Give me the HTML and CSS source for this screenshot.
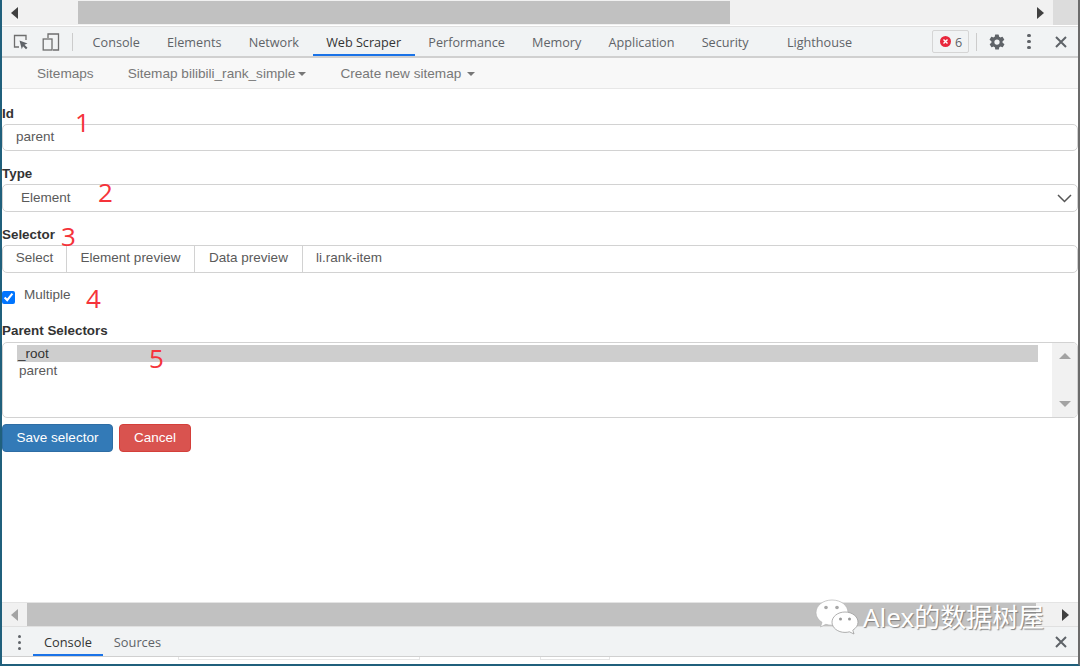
FILE: index.html
```html
<!DOCTYPE html>
<html lang="en">
<head>
<meta charset="utf-8">
<title>Web Scraper</title>
<link rel="stylesheet" href="styles.css">
</head>
<body>
<div class="window">
  <div class="hscroll top">
    <span class="arrow left dark"></span>
    <div class="track"><div class="thumb top-thumb"></div></div>
    <span class="arrow right dark"></span>
    <div class="corner"></div>
  </div>

  <div class="toolbar">
    <svg class="tool-icon first" width="18" height="18" viewBox="0 0 18 18" fill="none">
      <path d="M7 14H2.5V2.5H14V7" stroke="#6e6e6e" stroke-width="1.3"/>
      <path d="M7.5 7.5l8 3-3 1.2 3 3-1.5 1.500-3-3-1.200 3z" fill="#5f6368"/>
    </svg>
    <svg class="tool-icon second" width="18" height="20" viewBox="0 0 18 20" fill="none">
      <path d="M6 6V2h10.500v16H11" stroke="#6e6e6e" stroke-width="1.300"/>
      <rect x="1.200" y="7" width="8.800" height="11" stroke="#6e6e6e" stroke-width="1.300"/>
    </svg>
    <span class="vsep"></span>
    <div class="tabs">
      <span class="tab t-console">Console</span>
      <span class="tab t-elements">Elements</span>
      <span class="tab t-network">Network</span>
      <span class="tab active t-scraper">Web Scraper</span>
      <span class="tab t-perf">Performance</span>
      <span class="tab t-memory">Memory</span>
      <span class="tab t-app">Application</span>
      <span class="tab t-security">Security</span>
      <span class="tab t-light">Lighthouse</span>
    </div>
    <div class="tool-right">
      <span class="err-badge">
        <svg width="11" height="11" viewBox="0 0 11 11"><circle cx="5.500" cy="5.500" r="5.500" fill="#e8273c"/><path d="M3.500 3.500l4 4M7.500 3.500l-4 4" stroke="#fff" stroke-width="1.400"/></svg>
        <span>6</span>
      </span>
      <span class="vsep small"></span>
      <svg class="gear" width="18" height="18" viewBox="0 0 24 24"><path fill="#5f6368" d="M19.4 13a7.5 7.5 0 0 0 0-2l2.1-1.6a.5.5 0 0 0 .1-.6l-2-3.5a.5.5 0 0 0-.6-.2l-2.5 1a7.3 7.3 0 0 0-1.7-1l-.4-2.6a.5.5 0 0 0-.5-.5h-4a.5.5 0 0 0-.5.4l-.4 2.7a7.6 7.6 0 0 0-1.7 1l-2.5-1a.5.5 0 0 0-.6.2l-2 3.5a.5.5 0 0 0 .1.6L4.6 11a7.500 7.500 0 0 0 0 2l-2.100 1.600a.5.5 0 0 0-.1.6l2 3.500c.1.200.4.300.6.200l2.500-1c.5.400 1.100.700 1.700 1l.4 2.600c0 .3.200.5.500.5h4c.3 0 .5-.2.500-.4l.4-2.700a7.600 7.600 0 0 0 1.700-1l2.500 1c.2.100.5 0 .6-.2l2-3.500a.5.5 0 0 0-.1-.6zM12 15.500a3.500 3.500 0 1 1 0-7 3.500 3.500 0 0 1 0 7z"/></svg>
      <span class="dots"><i></i><i></i><i></i></span>
      <svg class="close" width="12" height="12" viewBox="0 0 12 12"><path d="M1 1l10 10M11 1L1 11" stroke="#5f6368" stroke-width="2"/></svg>
    </div>
  </div>

  <nav class="subnav">
    <span class="nav-item n-sitemaps">Sitemaps</span>
    <span class="nav-item n-sitemap">Sitemap bilibili_rank_simple<b class="caret"></b></span>
    <span class="nav-item n-create">Create new sitemap<b class="caret spaced"></b></span>
  </nav>

  <main class="content">
    <form class="form">
      <label class="label l-id">Id</label>
      <div class="control c-id">parent</div>
      <label class="label l-type">Type</label>
      <div class="control c-type">Element
        <svg class="chev" width="15" height="9" viewBox="0 0 15 9" fill="none"><path d="M1 1l6.500 6.500L14 1" stroke="#555" stroke-width="1.500"/></svg>
      </div>
      <label class="label l-selector">Selector</label>
      <div class="control group">
        <span class="addon a-select">Select</span>
        <span class="addon a-element">Element preview</span>
        <span class="addon a-data">Data preview</span>
        <span class="group-value">li.rank-item</span>
      </div>
      <div class="check-row">
        <input class="check" type="checkbox" checked>
        <span class="check-label">Multiple</span>
      </div>
      <label class="label l-parent">Parent Selectors</label>
      <div class="listbox">
        <div class="options">
          <div class="option selected">_root</div>
          <div class="option">parent</div>
        </div>
        <div class="list-scroll"><span class="tri up"></span><span class="tri down"></span></div>
      </div>
      <div class="buttons">
        <span class="btn save">Save selector</span>
        <span class="btn cancel">Cancel</span>
      </div>
    </form>
    <span class="mark m1">1</span>
    <span class="mark m2">2</span>
    <span class="mark m3">3</span>
    <span class="mark m4">4</span>
    <span class="mark m5">5</span>
  </main>

  <div class="hscroll bottom">
    <span class="arrow left grey"></span>
    <div class="track"><div class="thumb bottom-thumb"></div></div>
    <span class="arrow right dark"></span>
  </div>

  <div class="drawer">
    <span class="dots drawer-dots"><i></i><i></i><i></i></span>
    <span class="tab active d-console">Console</span>
    <span class="tab d-sources">Sources</span>
    <svg class="drawer-close" width="12" height="12" viewBox="0 0 12 12"><path d="M1 1l10 10M11 1L1 11" stroke="#5f6368" stroke-width="2"/></svg>
  </div>
  <div class="foot"><span class="foot-a"></span><span class="foot-b"></span></div>

  <div class="watermark">
    <svg width="44" height="36" viewBox="0 0 44 36">
      <path d="M17 1C8 1 1 6.500 1 13.500c0 4 2.300 7.500 6 9.800L5.500 28l5.300-2.700c2 .6 4 .9 6.200.9 9 0 16-5.600 16-12.700S26 1 17 1z" fill="#fff" stroke="#b5b5b5" stroke-width=".7"/>
      <path d="M30 13c-7.200 0-13 4.600-13 10.200S22.800 33.400 30 33.400c1.500 0 3-.2 4.400-.6L39 35l-1.200-3.800c3.200-2 5.200-4.800 5.200-8C43 17.600 37.200 13 30 13z" fill="#fff" stroke="#9a9a9a" stroke-width=".8"/>
      <circle cx="11" cy="8.500" r="1.800" fill="#a8a8a8"/><circle cx="22" cy="8.500" r="1.800" fill="#a8a8a8"/>
      <circle cx="25.500" cy="20" r="1.500" fill="#999"/><circle cx="34.500" cy="20" r="1.500" fill="#999"/>
    </svg>
    <span class="wm-text">Alex的数据树屋</span>
  </div>
</div>
</body>
</html>
```

FILE: styles.css
```css
* { box-sizing: border-box; }
html, body { margin: 0; padding: 0; height: 100%; background: #fff; overflow: hidden; }
.window {
  position: relative;
  width: 1080px;
  height: 666px;
  display: flex;
  flex-direction: column;
  border-left: 2px solid #20607c;
  border-right: 2px solid #6b6b6b;
  border-bottom: 2px solid #20607c;
  font-family: "Liberation Sans", Arial, sans-serif;
  font-size: 13.500px;
  color: #5a5a5a;
}

/* scrollbars */
.hscroll { display: flex; align-items: center; background: #f1f1f1; flex: none; }
.hscroll.top { height: 25px; }
.hscroll.bottom { height: 24px; border-top: 1px solid #e4e4e4; }
.track { flex: 1; height: 100%; display: flex; }
.top .track { padding: 1px 0; }
.thumb { background: #c1c1c1; height: 100%; }
.top-thumb { width: 652px; margin-left: 51px; }
.bottom-thumb { width: 1009px; }
.arrow { flex: none; width: 25px; display: flex; justify-content: center; }
.arrow::before { content: ""; border-top: 6px solid transparent; border-bottom: 6px solid transparent; }
.arrow.left::before { border-right: 7px solid #404040; }
.arrow.right::before { border-left: 7px solid #404040; }
.arrow.left.grey::before { border-right-color: #a3a3a3; }
.corner { flex: none; width: 25px; height: 100%; background: #dcdcdc; }

/* top toolbar */
.toolbar {
  flex: none;
  height: 32px;
  margin-top: 1px;
  display: flex;
  align-items: center;
  background: #f1f3f4;
  border-top: 1px solid #e0e0e0;
  border-bottom: 2px solid #d0d0d0;
  font-family: "Open Sans", "Noto Sans", sans-serif;
  font-size: 12.650px;
}
.tool-icon { flex: none; margin-left: 11px; }
.tool-icon.first { margin-left: 10px; }
.tool-icon.second { margin-left: 12px; }
.vsep { flex: none; width: 1px; height: 18px; background: #ccc; margin-left: 12px; }
.vsep.small { height: 18px; margin-left: 7px; }
.tabs { display: flex; height: 100%; align-self: stretch; }
.tab { display: flex; align-items: center; color: #5f6368; white-space: nowrap; padding: 0 13.600px; }
.tab.active { color: #333; box-shadow: inset 0 -2px 0 #1a73e8; }
.t-console { margin-left: 6px; }
.t-security { margin-right: 11px; }
.tool-right { margin-left: auto; display: flex; align-items: center; height: 100%; }
.err-badge {
  display: flex; align-items: center; gap: 4px;
  width: 37px; height: 23px; padding-left: 7px;
  border: 1px solid #d5d5d5; border-radius: 2px; color: #5f6368;
}
.gear { margin-left: 11px; }
.dots { display: flex; flex-direction: column; gap: 2.500px; margin-left: 21px; width: 4px; }
.dots i { width: 3.500px; height: 3.500px; border-radius: 50%; background: #5f6368; }
.close { margin-left: 24px; margin-right: 11px; }

/* sub navigation */
.subnav {
  flex: none; height: 31px; display: flex; align-items: center;
  background: #f8f8f8; border-bottom: 1px solid #e7e7e7; color: #777; font-size: 13.600px;
}
.nav-item { white-space: nowrap; }
.n-sitemaps { margin-left: 35px; }
.n-sitemap { margin-left: 34px; }
.n-create { margin-left: 34px; }
.caret {
  display: inline-block; width: 0; height: 0; margin-left: 3px; vertical-align: 2px;
  border-top: 4px solid #777; border-left: 4px solid transparent; border-right: 4px solid transparent;
}
.caret.spaced { margin-left: 6px; }

/* form */
.content { position: relative; flex: 1; min-height: 0; background: #fff; }
.form { display: flex; flex-direction: column; align-items: stretch; }
.label { font-weight: 700; color: #333; line-height: 16px; display: block; font-size: 13.400px; margin-bottom: -1px; }
.l-id { margin-top: 17px; }
.l-type { margin-top: 15px; }
.l-selector { margin-top: 15px; }
.l-parent { margin-top: 14px; }
.control {
  position: relative; display: flex; align-items: center;
  height: 27px; margin-top: 3px; padding-bottom: 2px;
  border: 1px solid #d2d2d2; border-radius: 5px; background: #fff;
}
.c-id { padding-left: 13px; }
.c-type { padding-left: 18px; height: 28px; }
.chev { position: absolute; right: 5px; top: 9px; }
.group { height: 28px; padding-bottom: 0; }
.addon { height: 100%; display: flex; align-items: center; border-right: 1px solid #d2d2d2; justify-content: center; padding-bottom: 3px; }
.a-select { width: 64px; }
.a-element { width: 128px; }
.a-data { width: 108px; }
.group-value { padding: 0 0 3px 13px; }
.check-row { display: flex; height: 26px; margin-top: 10px; position: relative; }
.check { width: 13px; height: 13px; margin: 8px 0 0 0; accent-color: #0075ff; flex: none; }
.check-label { margin-left: 9px; line-height: 24px; }
.listbox {
  display: flex; height: 76px; margin-top: 4px;
  border: 1px solid #d2d2d2; border-radius: 5px; overflow: hidden;
}
.options { flex: 1; padding: 2px 14px 0 14px; }
.option { height: 17px; line-height: 17px; padding-left: 2px; }
.option.selected { background: #cecece; color: #333; padding-left: 1px; }
.list-scroll {
  flex: none; width: 25px; background: #f1f1f1;
  display: flex; flex-direction: column; justify-content: space-between; align-items: center; padding: 10px 0;
}
.tri { width: 0; height: 0; border-left: 6px solid transparent; border-right: 6px solid transparent; }
.tri.up { border-bottom: 6px solid #a3a3a3; }
.tri.down { border-top: 6px solid #a3a3a3; }
.buttons { display: flex; gap: 6px; margin-top: 6px; }
.btn { display: flex; align-items: center; justify-content: center; height: 28px; padding-bottom: 2px; border-radius: 4px; color: #fff; }
.save { width: 111px; background: #337ab7; border: 1px solid #2e6da4; }
.cancel { width: 72px; background: #d9534f; border: 1px solid #d43f3a; }

/* red hand annotations (over the form) */
.mark { position: absolute; color: #f5333a; font-family: "Open Sans", sans-serif; font-size: 26px; line-height: 28px; }
.m1 { left: 73px; top: 19px; }
.m2 { left: 96px; top: 89px; }
.m3 { left: 59px; top: 133px; }
.m4 { left: 84px; top: 195px; }
.m5 { left: 147px; top: 255px; }

/* drawer */
.drawer {
  position: relative; flex: none; height: 31px; display: flex; align-items: stretch;
  background: #f1f3f4; border-top: 1px solid #e0e0e0; border-bottom: 1px solid #d0d0d0;
  font-family: "Open Sans", "Noto Sans", sans-serif; font-size: 12.800px;
}
.drawer-dots { margin: 8px 0 0 16px; gap: 3px; width: 3px; }
.drawer-dots i { width: 3px; height: 3px; }
.d-console { margin-left: 12px; padding: 0 11px; }
.d-sources { padding: 0 11px; }
.drawer-close { position: absolute; right: 11px; top: 9px; }
.foot { flex: none; height: 7px; background: #fff; position: relative; display: flex; align-items: flex-start; }
.foot-a { width: 242px; height: 3px; margin-left: 176px; border-bottom: 1px solid #e5e5e5; border-left: 1px solid #e5e5e5; border-right: 1px solid #e5e5e5; }
.foot-b { width: 70px; height: 3px; margin-left: 120px; border-bottom: 1px solid #e5e5e5; border-left: 1px solid #e5e5e5; border-right: 1px solid #e5e5e5; }

/* watermark over the bottom scrollbar */
.watermark { position: absolute; left: 813px; top: 599px; display: flex; align-items: center; gap: 4px; }
.wm-text {
  font-family: "Noto Sans", "Noto Sans CJK SC", sans-serif; font-size: 26px; line-height: 36px;
  color: #fff; text-shadow: 1px 1px 1px #808080; white-space: nowrap;
}
```
